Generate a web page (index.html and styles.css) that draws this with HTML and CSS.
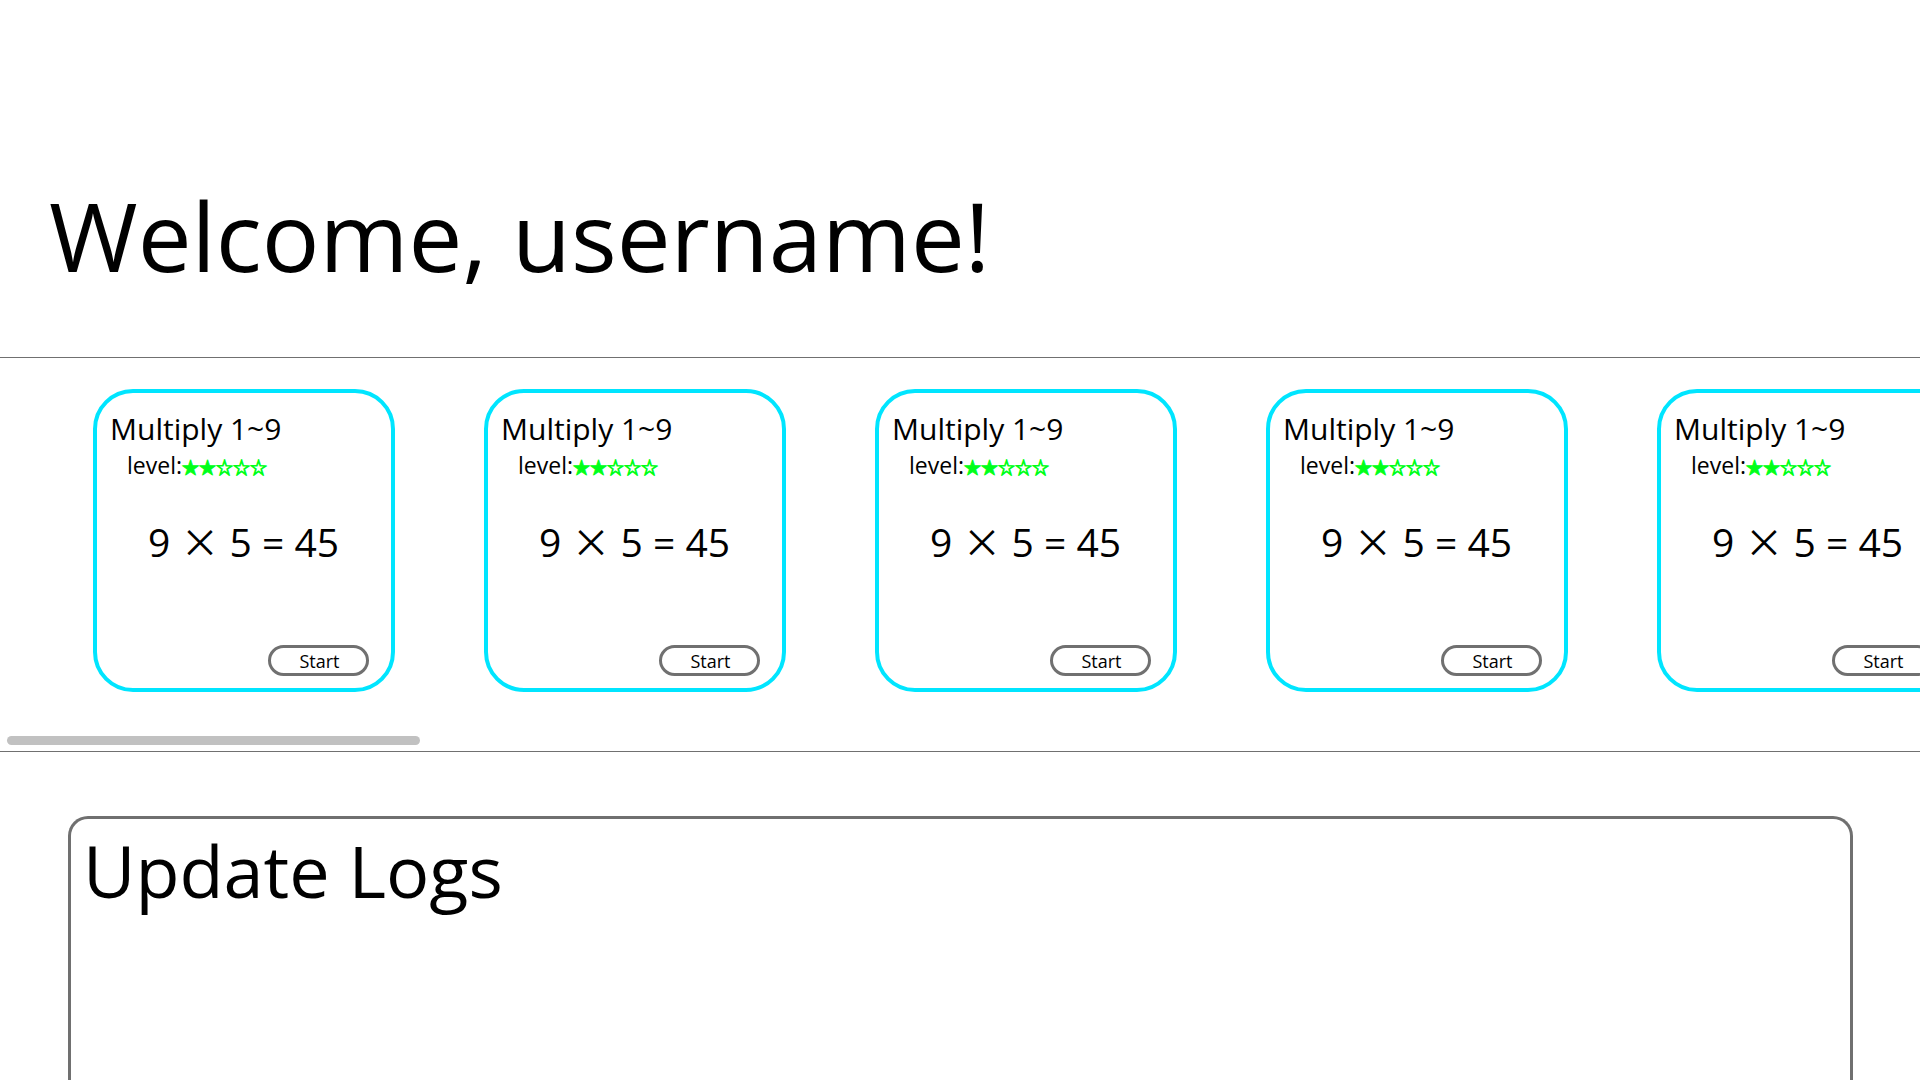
FILE: index.html
```html
<!DOCTYPE html>
<html lang="en">
<head>
<meta charset="utf-8">
<title>Multiplication practice</title>
<link rel="stylesheet" href="styles.css">
</head>
<body>
<header class="welcome">
  <h1 class="welcome-title">Welcome, username!</h1>
</header>
<main>
  <section class="lessons">
    <div class="card-row">
      <article class="card">
        <h2 class="card-title">Multiply 1~9</h2>
        <p class="card-level">level:<span class="stars">★★☆☆☆</span></p>
        <p class="equation">9 <span class="times">×</span> 5 = 45</p>
        <button class="start" type="button">Start</button>
      </article>
      <article class="card">
        <h2 class="card-title">Multiply 1~9</h2>
        <p class="card-level">level:<span class="stars">★★☆☆☆</span></p>
        <p class="equation">9 <span class="times">×</span> 5 = 45</p>
        <button class="start" type="button">Start</button>
      </article>
      <article class="card">
        <h2 class="card-title">Multiply 1~9</h2>
        <p class="card-level">level:<span class="stars">★★☆☆☆</span></p>
        <p class="equation">9 <span class="times">×</span> 5 = 45</p>
        <button class="start" type="button">Start</button>
      </article>
      <article class="card">
        <h2 class="card-title">Multiply 1~9</h2>
        <p class="card-level">level:<span class="stars">★★☆☆☆</span></p>
        <p class="equation">9 <span class="times">×</span> 5 = 45</p>
        <button class="start" type="button">Start</button>
      </article>
      <article class="card">
        <h2 class="card-title">Multiply 1~9</h2>
        <p class="card-level">level:<span class="stars">★★☆☆☆</span></p>
        <p class="equation">9 <span class="times">×</span> 5 = 45</p>
        <button class="start" type="button">Start</button>
      </article>
    </div>
    <div class="scroll-track"><div class="scroll-thumb"></div></div>
  </section>
  <section class="logs">
    <h2 class="logs-title">Update Logs</h2>
  </section>
</main>
</body>
</html>
```
FILE: styles.css
```css
* {
  box-sizing: border-box;
}

body {
  margin: 0;
  min-height: 100vh;
  display: flex;
  flex-direction: column;
  overflow: hidden;
  background: #fff;
  color: #000;
  font-family: "Segoe UI", "Open Sans", "Noto Sans", sans-serif;
}

h1, h2, p {
  margin: 0;
  font-weight: 400;
  white-space: nowrap;
}

main {
  flex: 1;
  display: flex;
  flex-direction: column;
}

.welcome {
  padding: 164px 49px 52px;
}

.welcome-title {
  font-size: 96px;
  line-height: 141px;
}

.lessons {
  border-top: 1px solid #707070;
  border-bottom: 1px solid #707070;
  padding-top: 31px;
  overflow: hidden;
}

.card-row {
  display: flex;
  gap: 89px;
  padding-left: 93px;
}

.card {
  flex: none;
  width: 302px;
  height: 303px;
  display: flex;
  flex-direction: column;
  padding: 16px 22px 12px 13px;
  border: 4px solid #00e5ff;
  border-radius: 40px;
}

.card-title {
  font-size: 30px;
  line-height: 40px;
}

.card-level {
  padding-left: 17px;
  font-size: 23px;
  line-height: 32px;
}

.stars {
  color: #00ff19;
  font-family: "Noto Sans CJK JP", sans-serif;
  font-size: 17px;
  -webkit-text-stroke: 1px #00ff19;
}

.equation {
  padding: 29px 0 0 38px;
  font-size: 39px;
  line-height: 56px;
}

.times {
  font-family: "Noto Sans CJK JP", sans-serif;
  font-weight: 400;
}

.start {
  width: 101px;
  height: 31px;
  margin-top: auto;
  align-self: flex-end;
  padding: 2px 0 0 2px;
  border: 3px solid #707070;
  border-radius: 16px;
  background: #fff;
  color: #000;
  font: 400 18px/23px "Segoe UI", "Open Sans", "Noto Sans", sans-serif;
}

.scroll-track {
  margin: 44px 7px 6px;
}

.scroll-thumb {
  width: 413px;
  height: 9px;
  border-radius: 5px;
  background: #c1c1c1;
}

.logs {
  flex: 1;
  margin: 64px 67px 0 68px;
  padding: 0 12px;
  border: 3px solid #707070;
  border-bottom: 0;
  border-radius: 20px 20px 0 0;
}

.logs-title {
  font-size: 72px;
  line-height: 102px;
}
```
